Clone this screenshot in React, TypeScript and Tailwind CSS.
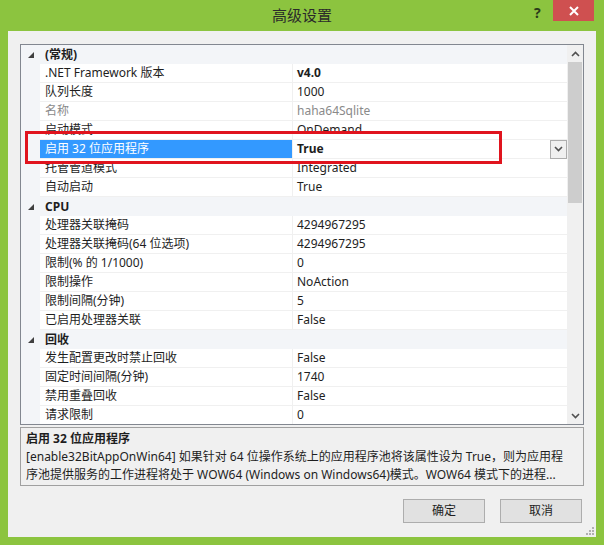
import type { ReactNode } from 'react';

type Row =
  | { kind: 'cat'; name: string }
  | { kind: 'prop'; name: string; value: string; bold?: boolean; muted?: boolean; selected?: boolean };

const rows: Row[] = [
  { kind: 'cat', name: '(常规)' },
  { kind: 'prop', name: '.NET Framework 版本', value: 'v4.0', bold: true },
  { kind: 'prop', name: '队列长度', value: '1000' },
  { kind: 'prop', name: '名称', value: 'haha64Sqlite', muted: true },
  { kind: 'prop', name: '启动模式', value: 'OnDemand' },
  { kind: 'prop', name: '启用 32 位应用程序', value: 'True', bold: true, selected: true },
  { kind: 'prop', name: '托管管道模式', value: 'Integrated' },
  { kind: 'prop', name: '自动启动', value: 'True' },
  { kind: 'cat', name: 'CPU' },
  { kind: 'prop', name: '处理器关联掩码', value: '4294967295' },
  { kind: 'prop', name: '处理器关联掩码(64 位选项)', value: '4294967295' },
  { kind: 'prop', name: '限制(% 的 1/1000)', value: '0' },
  { kind: 'prop', name: '限制操作', value: 'NoAction' },
  { kind: 'prop', name: '限制间隔(分钟)', value: '5' },
  { kind: 'prop', name: '已启用处理器关联', value: 'False' },
  { kind: 'cat', name: '回收' },
  { kind: 'prop', name: '发生配置更改时禁止回收', value: 'False' },
  { kind: 'prop', name: '固定时间间隔(分钟)', value: '1740' },
  { kind: 'prop', name: '禁用重叠回收', value: 'False' },
  { kind: 'prop', name: '请求限制', value: '0' },
];

const font = "font-['Noto_Sans','Noto_Sans_CJK_SC',sans-serif]";

function Chevron({ up }: { up?: boolean }) {
  return (
    <svg width="9" height="6" viewBox="0 0 9 6">
      <path
        d={up ? 'M1 5 L4.5 1.5 L8 5' : 'M1 1 L4.5 4.5 L8 1'}
        fill="none"
        stroke="#505050"
        strokeWidth="1.6"
      />
    </svg>
  );
}

function GridRow({ row }: { row: Row }) {
  if (row.kind === 'cat') {
    return (
      <div className="flex h-[19px] shrink-0 items-center bg-[#f3f5f8]">
        <div className="flex w-[19px] shrink-0 items-center justify-center">
          <svg width="6" height="6" viewBox="0 0 6 6">
            <path d="M6 0 L6 6 L0 6 Z" fill="#404040" />
          </svg>
        </div>
        <span className="pl-[5px] text-[12px] font-bold text-[#1e1e1e]">{row.name}</span>
      </div>
    );
  }
  return (
    <div className="flex h-[19px] shrink-0 bg-[#f3f5f8]">
      <div className="w-[19px] shrink-0" />
      <div
        className={`flex w-[252px] shrink-0 items-center border-b border-[#f0f0f0] pl-[5px] text-[12px] ${
          row.selected ? 'bg-[#3399ff] text-white' : row.muted ? 'bg-white text-[#8a8a8a]' : 'bg-white text-[#1e1e1e]'
        }`}
      >
        <span className="whitespace-nowrap">{row.name}</span>
      </div>
      <div className="flex flex-1 items-center border-b border-l border-[#f0f0f0] bg-white pl-[4px] pr-[0px] text-[12px]">
        <span
          className={`flex-1 whitespace-nowrap ${row.bold ? 'font-bold text-[#1e1e1e]' : row.muted ? 'text-[#8a8a8a]' : 'text-[#1e1e1e]'}`}
        >
          {row.value}
        </span>
        {row.selected && (
          <div className="flex h-[19px] w-[17px] items-center justify-center border border-[#adadad] bg-[#f0f0f0]">
            <Chevron />
          </div>
        )}
      </div>
    </div>
  );
}

function Button({ children }: { children: ReactNode }) {
  return (
    <button
      type="button"
      className="flex h-[24px] w-[82px] items-center justify-center border border-[#adadad] bg-[#e1e1e1] text-[12px] text-[#1e1e1e]"
    >
      {children}
    </button>
  );
}

export default function App() {
  return (
    <div className={`flex h-[545px] w-[604px] flex-col bg-[#8cc43f] ${font}`}>
      {/* title bar */}
      <div className="relative flex h-[31px] shrink-0 items-center justify-center">
        <span className="text-[15px] text-[#2a2a2a]">高级设置</span>
        <span className="absolute left-[534px] top-[2px] text-[14px] font-bold text-[#2a3a1a]">?</span>
        <div className="absolute left-[553px] top-0 flex h-[21px] w-[41px] items-center justify-center bg-[#cf5050]">
          <svg width="10" height="10" viewBox="0 0 10 10">
            <path d="M1 1 L9 9 M9 1 L1 9" stroke="white" strokeWidth="2" />
          </svg>
        </div>
      </div>

      {/* client */}
      <div className="mx-[8px] mb-[8px] flex flex-1 flex-col bg-[#f0f0f0] px-[12px] pt-[13px]">
        <div className="relative flex h-[381px] shrink-0 border border-[#828790] bg-white">
          <div className="flex flex-1 flex-col overflow-hidden">
            {rows.map((r, i) => (
              <GridRow key={i} row={r} />
            ))}
          </div>
          {/* scrollbar */}
          <div className="flex w-[16px] shrink-0 flex-col bg-[#f0f0f0]">
            <div className="flex h-[17px] items-center justify-center">
              <Chevron up />
            </div>
            <div className="mx-[1px] h-[141px] bg-[#cdcdcd]" />
            <div className="flex-1" />
            <div className="flex h-[17px] items-center justify-center">
              <Chevron />
            </div>
          </div>
          {/* annotation box */}
          <div className="absolute left-[4px] top-[86px] h-[33px] w-[477px] border-[3px] border-[#e0141e]" />
        </div>

        <div className="mt-[2px] flex h-[59px] shrink-0 flex-col border border-[#a0a0a0] px-[5px] pt-[2px] text-[12px] leading-[18px] text-[#1e1e1e]">
          <div className="font-bold">启用 32 位应用程序</div>
          <div className="overflow-hidden whitespace-nowrap">
            [enable32BitAppOnWin64] 如果针对 64 位操作系统上的应用程序池将该属性设为 True，则为应用程
          </div>
          <div className="overflow-hidden whitespace-nowrap">
            序池提供服务的工作进程将处于 WOW64 (Windows on Windows64)模式。WOW64 模式下的进程...
          </div>
        </div>

        <div className="relative mt-[13px] flex flex-1 justify-end gap-[15px] pr-[2px]">
          <div className="flex h-[24px] gap-[15px]">
            <Button>确定</Button>
            <Button>取消</Button>
          </div>
          <svg className="absolute bottom-[2px] right-[-10px]" width="8" height="8" viewBox="0 0 8 8">
            <rect x="6" y="0" width="2" height="2" fill="#b0b0b0" />
            <rect x="3" y="3" width="2" height="2" fill="#b0b0b0" />
            <rect x="6" y="3" width="2" height="2" fill="#b0b0b0" />
            <rect x="0" y="6" width="2" height="2" fill="#b0b0b0" />
            <rect x="3" y="6" width="2" height="2" fill="#b0b0b0" />
            <rect x="6" y="6" width="2" height="2" fill="#b0b0b0" />
          </svg>
        </div>
      </div>
    </div>
  );
}
